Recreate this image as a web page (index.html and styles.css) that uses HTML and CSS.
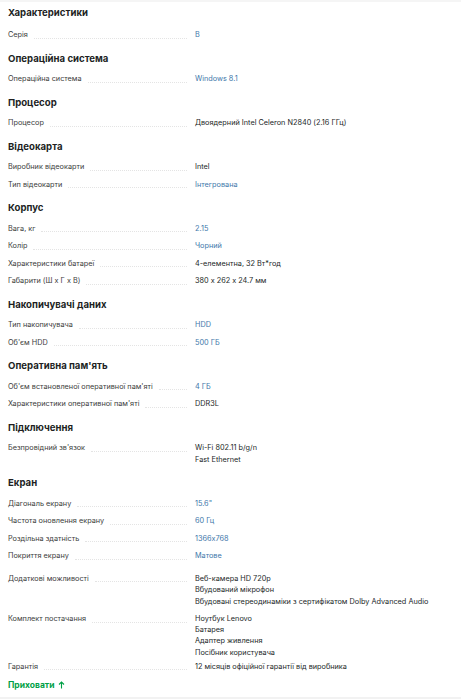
FILE: index.html
```html
<!DOCTYPE html>
<html lang="uk">
<head>
<meta charset="utf-8">
<title>Характеристики</title>
<link rel="stylesheet" href="styles.css">
</head>
<body>
<div class="topband"></div>
<div class="specs">
  <h2 class="title first">Характеристики</h2>
  <div class="row"><div class="label"><span>Серія</span></div><div class="value"><a class="link">B</a></div></div>

  <h3 class="title">Операційна система</h3>
  <div class="row"><div class="label"><span>Операційна система</span></div><div class="value"><a class="link">Windows 8.1</a></div></div>

  <h3 class="title">Процесор</h3>
  <div class="row"><div class="label"><span>Процесор</span></div><div class="value">Двоядерний Intel Celeron N2840 (2.16 ГГц)</div></div>

  <h3 class="title">Відеокарта</h3>
  <div class="row"><div class="label"><span>Виробник відеокарти</span></div><div class="value">Intel</div></div>
  <div class="row"><div class="label"><span>Тип відеокарти</span></div><div class="value"><a class="link">Інтегрована</a></div></div>

  <h3 class="title">Корпус</h3>
  <div class="row"><div class="label"><span>Вага, кг</span></div><div class="value"><a class="link">2.15</a></div></div>
  <div class="row"><div class="label"><span>Колір</span></div><div class="value"><a class="link">Чорний</a></div></div>
  <div class="row"><div class="label"><span>Характеристики батареї</span></div><div class="value">4-елементна, 32 Вт*год</div></div>
  <div class="row"><div class="label"><span>Габарити (Ш х Г х В)</span></div><div class="value">380 x 262 x 24.7 мм</div></div>

  <h3 class="title">Накопичувачі даних</h3>
  <div class="row"><div class="label"><span>Тип накопичувача</span></div><div class="value"><a class="link">HDD</a></div></div>
  <div class="row"><div class="label"><span>Об'єм HDD</span></div><div class="value"><a class="link">500 ГБ</a></div></div>

  <h3 class="title">Оперативна пам'ять</h3>
  <div class="row"><div class="label"><span>Об'єм встановленої оперативної пам'яті</span></div><div class="value"><a class="link">4 ГБ</a></div></div>
  <div class="row"><div class="label"><span>Характеристики оперативної пам'яті</span></div><div class="value">DDR3L</div></div>

  <h3 class="title">Підключення</h3>
  <div class="row"><div class="label"><span>Безпровідний зв'язок</span></div><div class="value">Wi-Fi 802.11 b/g/n<br>Fast Ethernet</div></div>

  <h3 class="title">Екран</h3>
  <div class="row"><div class="label"><span>Діагональ екрану</span></div><div class="value"><a class="link">15.6"</a></div></div>
  <div class="row"><div class="label"><span>Частота оновлення екрану</span></div><div class="value"><a class="link">60 Гц</a></div></div>
  <div class="row"><div class="label"><span>Роздільна здатність</span></div><div class="value"><a class="link">1366x768</a></div></div>
  <div class="row"><div class="label"><span>Покриття екрану</span></div><div class="value"><a class="link">Матове</a></div></div>

  <div class="group">
    <div class="row"><div class="label"><span>Додаткові можливості</span></div><div class="value">Веб-камера HD 720p<br>Вбудований мікрофон<br>Вбудовані стереодинаміки з сертифікатом Dolby Advanced Audio</div></div>
    <div class="row row-list"><div class="label"><span>Комплект постачання</span></div><div class="value">Ноутбук Lenovo<br>Батарея<br>Адаптер живлення<br>Посібник користувача</div></div>
    <div class="row row-last"><div class="label"><span>Гарантія</span></div><div class="value">12 місяців офіційної гарантії від виробника</div></div>
  </div>

  <a class="toggle">Приховати <svg class="arrow" width="7" height="8" viewBox="0 0 7 8"><path d="M3.5 7.5V1M1 3.5L3.5 1L6 3.5" fill="none" stroke="#00a046" stroke-width="1.1"/></svg></a>
</div>
<div class="bottomband"></div>
</body>
</html>
```

FILE: styles.css
```css
html, body {
  margin: 0;
  padding: 0;
  background: #ffffff;
}
body {
  font-family: Inter, "Noto Sans", Arial, sans-serif;
  font-feature-settings: "calt" 0;
  color: #221f1f;
}
.topband {
  height: 2px;
  background: #f5f5f5;
}
.specs {
  padding: 0 8px;
}
.title {
  margin: 8px 0 4.5px;
  font-size: 9.6px;
  line-height: 14px;
  font-weight: 700;
  color: #221f1f;
}
.title.first {
  margin-top: 4px;
  margin-bottom: 6px;
}
.row {
  display: flex;
  align-items: flex-start;
  padding: 3px 0;
  font-size: 7.3px;
  line-height: 11.5px;
}
.row-list {
  padding-top: 3px;
  padding-bottom: 0;
  line-height: 11.2px;
}
.row-last {
  padding-bottom: 0;
}
.label {
  width: 179px;
  flex: none;
  display: flex;
  align-items: flex-end;
  height: 11.5px;
  color: #3b3b3b;
}
.label span {
  white-space: nowrap;
  padding-right: 6px;
}
.label::after {
  content: "";
  flex: 1;
  border-bottom: 1px dotted #e4e4e4;
  margin-bottom: 2px;
}
.value {
  margin-left: 8px;
  color: #221f1f;
}
.link {
  color: #3e77aa;
  text-decoration: none;
}
.group {
  margin-top: 5px;
}
.toggle {
  display: inline-flex;
  align-items: center;
  gap: 3px;
  margin-top: 0;
  font-size: 8.5px;
  line-height: 12px;
  font-weight: 700;
  color: #00a046;
  text-decoration: none;
}
.bottomband {
  height: 12px;
  margin-top: 5px;
  background: #f2f2f2;
}
```
